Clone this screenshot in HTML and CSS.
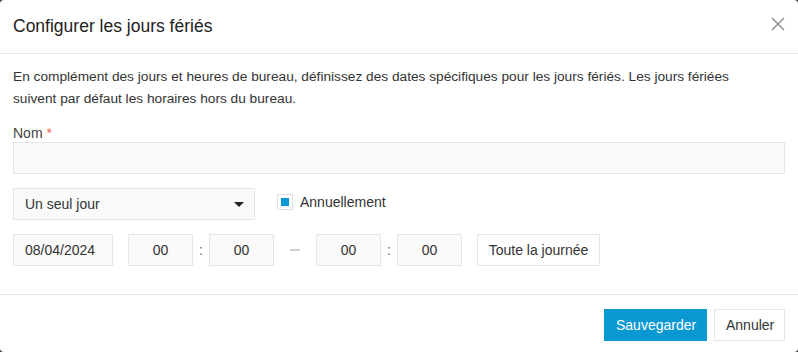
FILE: index.html
```html
<!DOCTYPE html>
<html lang="fr">
<head>
  <meta charset="UTF-8">
  <title>Configurer les jours fériés</title>
  <link rel="stylesheet" href="styles.css">
</head>
<body>

<div class="modal">
  <div class="modal-header">
    <h2>Configurer les jours fériés</h2>
    <button class="close" aria-label="Fermer">
      <svg width="14" height="14" viewBox="0 0 14 14"><path d="M1 1L13 13M13 1L1 13" stroke="#8a8a8a" stroke-width="1.4" fill="none"/></svg>
    </button>
  </div>

  <div class="modal-body">
    <p class="intro">En complément des jours et heures de bureau, définissez des dates spécifiques pour les jours fériés. Les jours fériées<br>suivent par défaut les horaires hors du bureau.</p>

    <label class="field-label" for="name">Nom <span class="req">*</span></label>
    <input id="name" class="field" type="text">

    <div class="row type-row">
      <div class="select">
        <span>Un seul jour</span>
        <span class="caret"></span>
      </div>
      <label class="check">
        <span class="box"><span class="tick"></span></span>
        Annuellement
      </label>
    </div>

    <div class="row time-row">
      <div class="field date">08/04/2024</div>
      <div class="field num">00</div>
      <span class="sep">:</span>
      <div class="field num">00</div>
      <span class="sep dash"><span></span></span>
      <div class="field num">00</div>
      <span class="sep">:</span>
      <div class="field num">00</div>
      <button class="btn all-day">Toute la journée</button>
    </div>
  </div>

  <div class="modal-footer">
    <button class="btn primary">Sauvegarder</button>
    <button class="btn">Annuler</button>
  </div>
</div>

</body>
</html>
```

FILE: styles.css
```css
body {
  margin: 0;
  background: #3b3b3b;
  font-family: "Liberation Sans", Arial, sans-serif;
  color: #333;
}
.modal {
  width: 798px;
  height: 352px;
  background: #fff;
  border-radius: 4px;
  overflow: hidden;
}
.modal-header {
  height: 54px;
  box-sizing: border-box;
  border-bottom: 1px solid #e8e8e8;
  display: flex;
  align-items: center;
  justify-content: space-between;
  padding: 0 13px;
}
.modal-header h2 {
  margin: 0;
  font-size: 17.5px;
  font-weight: normal;
  color: #222;
}
.close {
  border: none;
  background: none;
  padding: 0;
  width: 14px;
  height: 14px;
  margin-top: -5px;
}
.modal-body {
  padding: 12px 13px 28px;
}
.intro {
  margin: 0 0 14px;
  font-size: 13.7px;
  line-height: 22px;
}
.field-label {
  display: block;
  font-size: 14px;
  line-height: 18px;
  color: #444;
}
.req {
  color: #ee6b5b;
}
.field {
  display: block;
  box-sizing: border-box;
  height: 32px;
  background: #fafafa;
  border: 1px solid #e6e6e6;
  font-family: inherit;
  font-size: 14px;
  color: #333;
}
input.field {
  width: 100%;
  margin: 0;
  padding: 0 11px;
}
.row {
  display: flex;
  margin-top: 14px;
}
.select {
  width: 242px;
  height: 32px;
  box-sizing: border-box;
  background: #fafafa;
  border: 1px solid #e6e6e6;
  padding: 0 10px 0 11px;
  display: flex;
  align-items: center;
  justify-content: space-between;
  font-size: 14px;
}
.caret {
  width: 0;
  height: 0;
  border-left: 5px solid transparent;
  border-right: 5px solid transparent;
  border-top: 5px solid #222;
}
.check {
  margin: 6px 0 0 22px;
  display: flex;
  align-items: flex-start;
  gap: 7px;
  font-size: 14px;
  line-height: 16px;
}
.box {
  width: 16px;
  height: 16px;
  box-sizing: border-box;
  border: 1px solid #e0e0e0;
  display: flex;
  align-items: center;
  justify-content: center;
}
.tick {
  width: 8px;
  height: 8px;
  background: #0a98d3;
}
.time-row {
  align-items: center;
}
.date {
  width: 100px;
  padding: 0 11px;
  line-height: 30px;
  margin-right: 15px;
}
.num {
  width: 65px;
  text-align: center;
  line-height: 30px;
}
.sep {
  width: 16px;
  text-align: center;
  font-size: 14px;
  color: #666;
}
.dash {
  width: 42px;
  display: flex;
  justify-content: center;
}
.dash span {
  width: 10px;
  height: 2px;
  background: #d0d0d0;
}
.btn {
  height: 32px;
  box-sizing: border-box;
  padding: 0 11px;
  background: #fff;
  border: 1px solid #e6e6e6;
  font-family: inherit;
  font-size: 14px;
  color: #333;
  white-space: nowrap;
}
.all-day {
  margin-left: 15px;
  width: 123px;
  padding: 0;
}
.modal-footer {
  border-top: 1px solid #e8e8e8;
  padding: 14px 13px 0;
  display: flex;
  justify-content: flex-end;
  gap: 7px;
}
.primary {
  width: 103px;
  background: #0a98d3;
  border-color: #0a98d3;
  color: #fff;
}
.modal-footer .btn:last-child {
  width: 71px;
}
```
